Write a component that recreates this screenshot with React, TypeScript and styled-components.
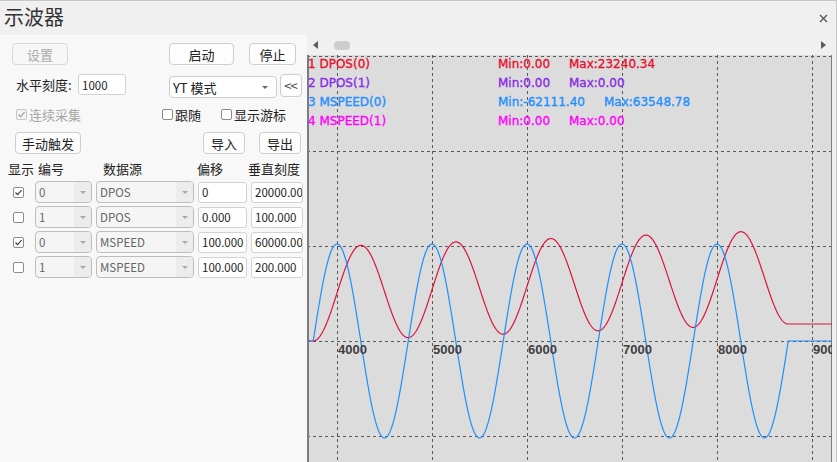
import React from 'react'
import styled, { createGlobalStyle } from 'styled-components'

const GlobalStyle = createGlobalStyle`
  html, body {
    margin: 0;
    padding: 0;
    background: #f0f0f0;
  }
  body {
    font-family: "Noto Sans CJK SC", "Noto Sans", sans-serif;
    color: #222;
  }
`

const SWindow = styled.div`
  width: 837px;
  height: 462px;
  box-sizing: border-box;
  border-top: 1px solid #c6c6c6;
  border-right: 1px solid #c6c6c6;
  background: #f0f0f0;
  display: flex;
  flex-direction: column;
  overflow: hidden;
`

const STitleBar = styled.div`
  height: 34px;
  display: flex;
  align-items: center;
  justify-content: space-between;
  padding: 0 8px 0 4px;
  flex-shrink: 0;
`

const STitle = styled.span`
  font-size: 20px;
  line-height: 24px;
  color: #333;
  margin-top: -2px;
`

const SBody = styled.div`
  flex: 1;
  display: flex;
  min-height: 0;
`

const SLeftPanel = styled.div`
  width: 307px;
  flex-shrink: 0;
  background: #f8f8f8;
  padding-top: 8px;
  display: flex;
  flex-direction: column;
  font-size: 13px;
`

const SRow = styled.div<{ $top: number; $h: number; $left?: number; $start?: boolean }>`
  display: flex;
  align-items: ${p => (p.$start ? 'flex-start' : 'center')};
  margin-top: ${p => p.$top}px;
  height: ${p => p.$h}px;
  padding-left: ${p => p.$left ?? 0}px;
`

const SButton = styled.div<{ $w: number; $gap?: number; $disabled?: boolean }>`
  width: ${p => p.$w}px;
  height: 22px;
  margin-left: ${p => p.$gap ?? 0}px;
  box-sizing: border-box;
  border: 1px solid ${p => (p.$disabled ? '#d9d9d9' : '#cdcdcd')};
  border-radius: 4px;
  background: ${p => (p.$disabled ? '#f7f7f7' : '#fdfdfd')};
  color: ${p => (p.$disabled ? '#a9a9a9' : '#222')};
  display: flex;
  align-items: center;
  justify-content: center;
  font-size: 13px;
  flex-shrink: 0;
`

const SLabel = styled.span<{ $w: number }>`
  width: ${p => p.$w}px;
  flex-shrink: 0;
  font-size: 13px;
  line-height: 21px;
  color: #222;
`

const SField = styled.input<{ $w: number; $gap?: number }>`
  width: ${p => p.$w}px;
  height: 21px;
  margin: 0 0 0 ${p => p.$gap ?? 0}px;
  box-sizing: border-box;
  border: 1px solid #d2d2d2;
  border-radius: 3px;
  background: #fff;
  padding: 0 0 0 3px;
  font-family: "Noto Sans CJK SC", "Noto Sans", sans-serif;
  font-size: 11.5px;
  color: #222;
  outline: none;
`

const SSelect = styled.div<{ $w: number; $gap?: number }>`
  width: ${p => p.$w}px;
  height: 22px;
  margin-left: ${p => p.$gap ?? 0}px;
  margin-top: 2px;
  box-sizing: border-box;
  border: 1px solid #cdcdcd;
  border-radius: 4px;
  background: #fff;
  display: flex;
  align-items: center;
  justify-content: space-between;
  padding: 0 8px 0 3px;
  font-size: 13px;
  flex-shrink: 0;
`

const SArrow = styled.span<{ $color?: string }>`
  width: 0;
  height: 0;
  border-left: 3px solid transparent;
  border-right: 3px solid transparent;
  border-top: 3px solid ${p => p.$color ?? '#666'};
`

const SSquareButton = styled(SButton)`
  height: 23px;
  font-size: 13px;
  color: #444;
  letter-spacing: -1px;
  padding-right: 1px;
`

const SCheckItem = styled.div<{ $w: number; $disabled?: boolean }>`
  width: ${p => p.$w}px;
  flex-shrink: 0;
  display: flex;
  align-items: center;
  gap: 2px;
  font-size: 13px;
  color: ${p => (p.$disabled ? '#a6a6a6' : '#222')};
`

const SBox = styled.span<{ $disabled?: boolean }>`
  width: 11px;
  height: 11px;
  box-sizing: border-box;
  border: 1px solid ${p => (p.$disabled ? '#c4c4c4' : '#8c8c8c')};
  border-radius: 2px;
  background: ${p => (p.$disabled ? '#f4f4f4' : '#fff')};
  display: inline-flex;
  align-items: center;
  justify-content: center;
  flex-shrink: 0;
`

const COLS = '26px 61px 102px 53px 54px'

const STableHead = styled.div`
  display: grid;
  grid-template-columns: ${COLS};
  padding-left: 8px;
  margin-top: 5px;
  height: 16px;
  align-items: center;
  font-size: 13px;
  color: #222;
`

const SHeadCell = styled.span<{ $shift?: number }>`
  margin-left: ${p => p.$shift ?? 0}px;
  white-space: nowrap;
`

const STableBody = styled.div`
  display: grid;
  grid-template-columns: ${COLS};
  grid-auto-rows: 22px;
  row-gap: 3px;
  padding-left: 8px;
  margin-top: 6px;
  align-items: center;
`

const SCell = styled.div<{ $shift?: number }>`
  display: flex;
  align-items: center;
  margin-left: ${p => p.$shift ?? 0}px;
`

const SCombo = styled.div<{ $w: number }>`
  width: ${p => p.$w}px;
  height: 22px;
  box-sizing: border-box;
  border: 1px solid #bdbdbd;
  border-radius: 4px;
  background: #f5f5f5;
  display: flex;
  overflow: hidden;
  font-size: 11.5px;
  color: #666;
`

const SComboText = styled.span`
  flex: 1;
  padding-left: 3px;
  display: flex;
  align-items: center;
`

const SComboButton = styled.span`
  width: 17px;
  background: #ececec;
  display: flex;
  align-items: center;
  justify-content: center;
`

const SRightPanel = styled.div`
  flex: 1;
  display: flex;
  flex-direction: column;
  min-width: 0;
`

const SScrollRow = styled.div`
  height: 20px;
  display: flex;
  align-items: center;
  padding: 0 10px 0 6px;
  flex-shrink: 0;
`

const STri = styled.span<{ $dir: 'left' | 'right' }>`
  width: 0;
  height: 0;
  border-top: 4px solid transparent;
  border-bottom: 4px solid transparent;
  ${p =>
    p.$dir === 'left'
      ? 'border-right: 5px solid #5c5c5c;'
      : 'border-left: 5px solid #5c5c5c; margin-left: auto;'}
`

const SThumb = styled.span`
  width: 16px;
  height: 9px;
  margin-left: 16px;
  border-radius: 4px;
  background: #cdcdcd;
`

const SChart = styled.svg`
  display: block;
  flex-shrink: 0;
`

// chart geometry (local px)
const W = 525
const H = 407
const ZERO = 286
const X0 = 6.25
const PERIOD = 95
const X1 = X0 + PERIOD * 5
const GRID_X = [30, 125, 220, 315, 410, 505]
const GRID_Y = [1, 96, 191, 286, 381]

function trace(f: (x: number) => number) {
  const pts: string[] = []
  for (let x = 1; x <= W; x += 0.5) pts.push(`${x.toFixed(1)},${f(x).toFixed(2)}`)
  return 'M' + pts.join(' L')
}

const speedPath = trace(x => {
  if (x < X0 || x > X1) return ZERO
  return ZERO - 97 * Math.sin((2 * Math.PI * (x - X0)) / PERIOD)
})

const posPath = trace(x => {
  const c = Math.min(Math.max(x, X0), X1)
  const t = (2 * Math.PI * (c - X0)) / PERIOD
  return ZERO - (47 * (1 - Math.cos(t)) + (3.4 * (c - X0)) / PERIOD)
})

const legend = [
  { name: '1 DPOS(0)', min: 'Min:0.00', max: 'Max:23240.34', maxX: 262, color: '#e8102e' },
  { name: '2 DPOS(1)', min: 'Min:0.00', max: 'Max:0.00', maxX: 262, color: '#8a2be2' },
  { name: '3 MSPEED(0)', min: 'Min:-62111.40', max: 'Max:63548.78', maxX: 297, color: '#1e8fff' },
  { name: '4 MSPEED(1)', min: 'Min:0.00', max: 'Max:0.00', maxX: 262, color: '#ff00ff' },
]

const ticks = ['4000', '5000', '6000', '7000', '8000', '900']

const channels = [
  { on: true, num: '0', src: 'DPOS', offset: '0', scale: '20000.000' },
  { on: false, num: '1', src: 'DPOS', offset: '0.000', scale: '100.000' },
  { on: true, num: '0', src: 'MSPEED', offset: '100.000', scale: '60000.000' },
  { on: false, num: '1', src: 'MSPEED', offset: '100.000', scale: '200.000' },
]

const Check = ({ checked, disabled }: { checked?: boolean; disabled?: boolean }) => (
  <SBox $disabled={disabled}>
    {checked && (
      <svg width="9" height="9" viewBox="0 0 9 9">
        <path d="M1.5 4.5 L3.6 6.6 L7.6 2.2" fill="none" stroke={disabled ? '#9a9a9a' : '#3a3a3a'} strokeWidth="1.1" />
      </svg>
    )}
  </SBox>
)

const Combo = ({ w, text }: { w: number; text: string }) => (
  <SCombo $w={w}>
    <SComboText>{text}</SComboText>
    <SComboButton>
      <SArrow $color="#a8a8a8" />
    </SComboButton>
  </SCombo>
)

const Scope = () => (
  <SChart width={W} height={H} viewBox={`0 0 ${W} ${H}`}>
    <rect x="0" y="0" width={W} height={H} fill="#dcdcdc" />
    <g stroke="#595959" strokeWidth="1" strokeDasharray="3 3">
      {GRID_Y.map(y => (
        <line key={'h' + y} x1="0" x2={W} y1={y + 0.5} y2={y + 0.5} />
      ))}
      {GRID_X.map(x => (
        <line key={'v' + x} x1={x + 0.5} x2={x + 0.5} y1="0" y2={H} />
      ))}
    </g>
    <line x1="1" x2="1" y1="0" y2={H} stroke="#7c7c7c" strokeWidth="2" />
    <line x1={W - 0.5} x2={W - 0.5} y1="0" y2={H} stroke="#7c7c7c" strokeWidth="1" />

    <path d={posPath} fill="none" stroke="#dc143c" strokeWidth="1.2" />
    <path d={speedPath} fill="none" stroke="#1e8fff" strokeWidth="1.2" />

    <g fontFamily='"Liberation Sans", Arial, sans-serif' fontSize="13" fontWeight="bold" fill="#3f3f3f">
      {ticks.map((t, i) => (
        <text key={t} x={GRID_X[i] + 1} y={299}>
          {t}
        </text>
      ))}
    </g>

    <g fontFamily='"DejaVu Sans", sans-serif' fontSize="12">
      {legend.map((l, i) => (
        <g key={l.name} fill={l.color} stroke={l.color} strokeWidth="0.35">
          <text x="1" y={12.5 + i * 19}>{l.name}</text>
          <text x="191" y={12.5 + i * 19}>{l.min}</text>
          <text x={l.maxX} y={12.5 + i * 19}>{l.max}</text>
        </g>
      ))}
    </g>
  </SChart>
)

const CloseIcon = () => (
  <svg width="9" height="9" viewBox="0 0 9 9">
    <path d="M1 1 L8 8 M8 1 L1 8" stroke="#555" strokeWidth="1.3" />
  </svg>
)

const App = () => {
  return (
    <>
      <GlobalStyle />
      <SWindow>
        <STitleBar>
          <STitle>示波器</STitle>
          <CloseIcon />
        </STitleBar>
        <SBody>
          <SLeftPanel>
            <SRow $top={0} $h={22} $left={12}>
              <SButton $w={56} $disabled>设置</SButton>
              <SButton $w={65} $gap={101}>启动</SButton>
              <SButton $w={47} $gap={15}>停止</SButton>
            </SRow>

            <SRow $top={9} $h={24} $left={16} $start>
              <SLabel $w={62}>水平刻度:</SLabel>
              <SField $w={48} readOnly defaultValue="1000" />
              <SSelect $w={108} $gap={43}>
                <span>YT 模式</span>
                <SArrow />
              </SSelect>
              <SSquareButton $w={22} $gap={3}>&lt;&lt;</SSquareButton>
            </SRow>

            <SRow $top={10} $h={13} $left={16}>
              <SCheckItem $w={146} $disabled>
                <Check checked disabled />
                连续采集
              </SCheckItem>
              <SCheckItem $w={59}>
                <Check />
                跟随
              </SCheckItem>
              <SCheckItem $w={70}>
                <Check />
                显示游标
              </SCheckItem>
            </SRow>

            <SRow $top={11} $h={22} $left={15}>
              <SButton $w={66}>手动触发</SButton>
              <SButton $w={42} $gap={122}>导入</SButton>
              <SButton $w={42} $gap={14}>导出</SButton>
            </SRow>

            <STableHead>
              <SHeadCell>显示</SHeadCell>
              <SHeadCell $shift={4}>编号</SHeadCell>
              <SHeadCell $shift={8}>数据源</SHeadCell>
              <SHeadCell>偏移</SHeadCell>
              <SHeadCell $shift={-2}>垂直刻度</SHeadCell>
            </STableHead>

            <STableBody>
              {channels.map((c, i) => (
                <React.Fragment key={i}>
                  <SCell $shift={5}>
                    <Check checked={c.on} />
                  </SCell>
                  <SCell $shift={1}>
                    <Combo w={57} text={c.num} />
                  </SCell>
                  <SCell $shift={1}>
                    <Combo w={98} text={c.src} />
                  </SCell>
                  <SCell $shift={1}>
                    <SField $w={49} readOnly defaultValue={c.offset} />
                  </SCell>
                  <SCell $shift={1}>
                    <SField $w={52} readOnly defaultValue={c.scale} />
                  </SCell>
                </React.Fragment>
              ))}
            </STableBody>
          </SLeftPanel>

          <SRightPanel>
            <SScrollRow>
              <STri $dir="left" />
              <SThumb />
              <STri $dir="right" />
            </SScrollRow>
            <Scope />
          </SRightPanel>
        </SBody>
      </SWindow>
    </>
  )
}

export default App
